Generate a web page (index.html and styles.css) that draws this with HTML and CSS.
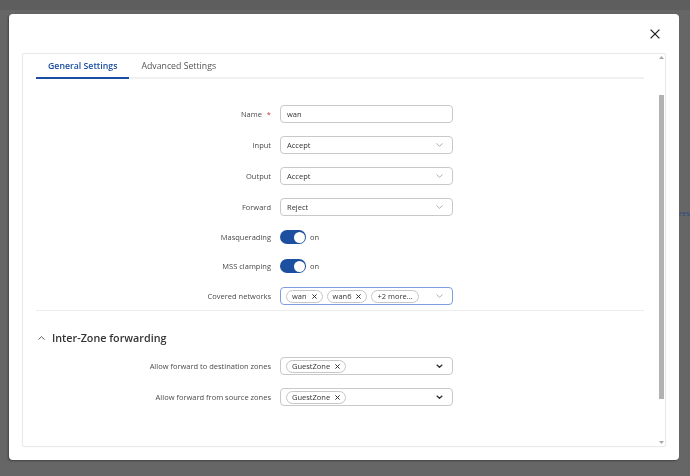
FILE: index.html
```html
<!DOCTYPE html>
<html>
<head>
<meta charset="utf-8">
<link rel="stylesheet" href="styles.css">
</head>
<body>
<div class="page">
  <div class="page-top"></div>
  <div class="page-body"><span class="bg-link">res</span></div>
</div>
<div class="modal">
  <div class="modal-head">
    <button class="close" aria-label="Close">
      <svg width="10" height="10" viewBox="0 0 10 10"><path d="M0.6 0.6 L9.4 9.4 M9.4 0.6 L0.6 9.4" stroke="#222" stroke-width="1.3" fill="none"/></svg>
    </button>
  </div>
  <div class="card">
    <div class="card-main">
      <div class="tabs">
        <div class="tab active">General Settings</div>
        <div class="tab">Advanced Settings</div>
      </div>

      <div class="form">
        <div class="label">Name<span class="req">*</span></div>
        <div class="input">wan</div>

        <div class="label">Input</div>
        <div class="input select"><span>Accept</span><svg class="chev" width="7" height="4" viewBox="0 0 7 4"><path d="M0.5 0.5 L3.5 3.3 L6.5 0.5" stroke="#9a9a9a" stroke-width="0.8" fill="none"/></svg></div>

        <div class="label">Output</div>
        <div class="input select"><span>Accept</span><svg class="chev" width="7" height="4" viewBox="0 0 7 4"><path d="M0.5 0.5 L3.5 3.3 L6.5 0.5" stroke="#9a9a9a" stroke-width="0.8" fill="none"/></svg></div>

        <div class="label">Forward</div>
        <div class="input select"><span>Reject</span><svg class="chev" width="7" height="4" viewBox="0 0 7 4"><path d="M0.5 0.5 L3.5 3.3 L6.5 0.5" stroke="#9a9a9a" stroke-width="0.8" fill="none"/></svg></div>

        <div class="label">Masquerading</div>
        <div class="toggle-wrap"><span class="toggle"><span class="knob"></span></span><span>on</span></div>

        <div class="label">MSS clamping</div>
        <div class="toggle-wrap"><span class="toggle"><span class="knob"></span></span><span>on</span></div>

        <div class="label">Covered networks</div>
        <div class="input select multi focused">
          <span class="chip">wan<svg width="5" height="5" viewBox="0 0 5 5"><path d="M0.4 0.4 L4.6 4.6 M4.6 0.4 L0.4 4.6" stroke="#333" stroke-width="1" fill="none"/></svg></span>
          <span class="chip">wan6<svg width="5" height="5" viewBox="0 0 5 5"><path d="M0.4 0.4 L4.6 4.6 M4.6 0.4 L0.4 4.6" stroke="#333" stroke-width="1" fill="none"/></svg></span>
          <span class="chip">+2 more...</span>
          <svg class="chev" width="7" height="4" viewBox="0 0 7 4"><path d="M0.5 0.5 L3.5 3.3 L6.5 0.5" stroke="#9a9a9a" stroke-width="0.8" fill="none"/></svg>
        </div>
      </div>

      <div class="sep"></div>

      <div class="section-head">
        <svg width="7" height="4" viewBox="0 0 7 4"><path d="M0.5 3.5 L3.5 0.7 L6.5 3.5" stroke="#555" stroke-width="0.9" fill="none"/></svg>
        <span>Inter-Zone forwarding</span>
      </div>

      <div class="form form-2">
        <div class="label">Allow forward to destination zones</div>
        <div class="input select multi">
          <span class="chip">GuestZone<svg width="5" height="5" viewBox="0 0 5 5"><path d="M0.4 0.4 L4.6 4.6 M4.6 0.4 L0.4 4.6" stroke="#333" stroke-width="1" fill="none"/></svg></span>
          <svg class="chev" width="7" height="4" viewBox="0 0 7 4"><path d="M0.7 0.7 L3.5 3.3 L6.3 0.7" stroke="#333" stroke-width="1.3" fill="none"/></svg>
        </div>

        <div class="label">Allow forward from source zones</div>
        <div class="input select multi">
          <span class="chip">GuestZone<svg width="5" height="5" viewBox="0 0 5 5"><path d="M0.4 0.4 L4.6 4.6 M4.6 0.4 L0.4 4.6" stroke="#333" stroke-width="1" fill="none"/></svg></span>
          <svg class="chev" width="7" height="4" viewBox="0 0 7 4"><path d="M0.7 0.7 L3.5 3.3 L6.3 0.7" stroke="#333" stroke-width="1.3" fill="none"/></svg>
        </div>
      </div>
    </div>

    <div class="scrollbar">
      <svg width="5" height="3" viewBox="0 0 5 3"><path d="M0 3 L2.5 0 L5 3 Z" fill="#a8a8a8"/></svg>
      <div class="thumb"></div>
      <svg class="down" width="5" height="3" viewBox="0 0 5 3"><path d="M0 0 L2.5 3 L5 0 Z" fill="#a8a8a8"/></svg>
    </div>
  </div>
</div>
</body>
</html>
```

FILE: styles.css
```css
* { box-sizing: border-box; }

body {
  margin: 0;
  width: 690px;
  height: 476px;
  overflow: hidden;
  background: #666666;
  font-family: "Open Sans", "Noto Sans", sans-serif;
}

.page-top {
  height: 10px;
  background: #5e5e5e;
}

.page-body {
  padding: 198px 0 0 679px;
  white-space: nowrap;
  overflow: hidden;
  font-size: 7.5px;
  line-height: 10px;
}

.bg-link {
  color: #2b4a7e;
  font-size: 7.5px;
  line-height: 10px;
}

.modal {
  position: fixed;
  left: 9px;
  top: 14px;
  width: 670px;
  height: 446px;
  background: #fff;
  border-radius: 4px;
  box-shadow: -1px 1px 2px rgba(0, 0, 0, 0.35);
  padding: 0 13px 13px;
  display: flex;
  flex-direction: column;
}

.modal-head {
  height: 39px;
  flex: none;
  display: flex;
  justify-content: flex-end;
  align-items: flex-start;
  padding: 15px 6px 0 0;
}

.close {
  border: 0;
  background: none;
  padding: 0;
  width: 10px;
  height: 10px;
  display: block;
}

.close svg { display: block; }

.card {
  flex: 1;
  border: 1px solid #e9e9e9;
  border-radius: 2px;
  box-shadow: 0 0 2px rgba(0, 0, 0, 0.04);
  display: flex;
  min-height: 0;
}

.card-main {
  flex: 1;
  min-width: 0;
  padding: 0 14px 0 13px;
}

.tabs {
  display: flex;
  border-bottom: 2px solid #f1f1f1;
}

.tab {
  height: 25px;
  padding: 0 12px;
  margin-bottom: -2px;
  border-bottom: 2px solid transparent;
  display: flex;
  align-items: center;
  font-size: 8.75px;
  color: #555;
}

.tab.active {
  color: #1b4ea0;
  font-weight: 600;
  border-bottom-color: #1b4ea0;
}

.form {
  display: grid;
  grid-template-columns: 235px 173px;
  column-gap: 9px;
  row-gap: 13px;
  align-items: center;
  margin-top: 26px;
}

.form-2 { margin-top: 12px; }

.label {
  text-align: right;
  font-size: 7.5px;
  color: #4a4a4a;
  white-space: nowrap;
}

.req {
  color: #d8342b;
  margin-left: 5px;
}

.input {
  height: 18px;
  border: 1px solid #c9c9c9;
  border-radius: 4px;
  display: flex;
  align-items: center;
  padding: 0 6px;
  font-size: 7.5px;
  color: #333;
}

.select { padding-right: 9px; }

.multi {
  padding-left: 5px;
  gap: 4px;
}

.focused { border-color: #7d9fdf; }

.chev {
  margin-left: auto;
  flex: none;
  display: block;
}

.chip {
  height: 13px;
  border: 1px solid #c6c6c6;
  border-radius: 7px;
  padding: 0 5px;
  display: flex;
  align-items: center;
  gap: 5px;
  font-size: 7.5px;
  color: #333;
  white-space: nowrap;
}

.chip svg { display: block; }

.toggle-wrap {
  height: 16px;
  display: flex;
  align-items: center;
  gap: 4px;
  font-size: 7.5px;
  color: #444;
}

.toggle {
  width: 26px;
  height: 14px;
  border-radius: 7px;
  background: #1c4f9f;
  display: flex;
  justify-content: flex-end;
  align-items: center;
  padding: 0 1.5px;
}

.knob {
  width: 11px;
  height: 11px;
  border-radius: 50%;
  background: #fff;
}

.sep {
  height: 1px;
  background: #ececec;
  margin-top: 5px;
}

.section-head {
  height: 15px;
  margin-top: 19px;
  padding-left: 2px;
  display: flex;
  align-items: center;
  gap: 7px;
  font-size: 10.75px;
  font-weight: 600;
  color: #333;
}

.section-head svg { display: block; flex: none; }

.scrollbar {
  width: 7px;
  flex: none;
  display: flex;
  flex-direction: column;
  align-items: center;
  padding-top: 2px;
}

.scrollbar svg { display: block; flex: none; }

.thumb {
  width: 5px;
  height: 304px;
  margin-top: 36px;
  background: #b2b2b2;
  flex: none;
}

.scrollbar .down { margin-top: auto; margin-bottom: 2px; }
```
